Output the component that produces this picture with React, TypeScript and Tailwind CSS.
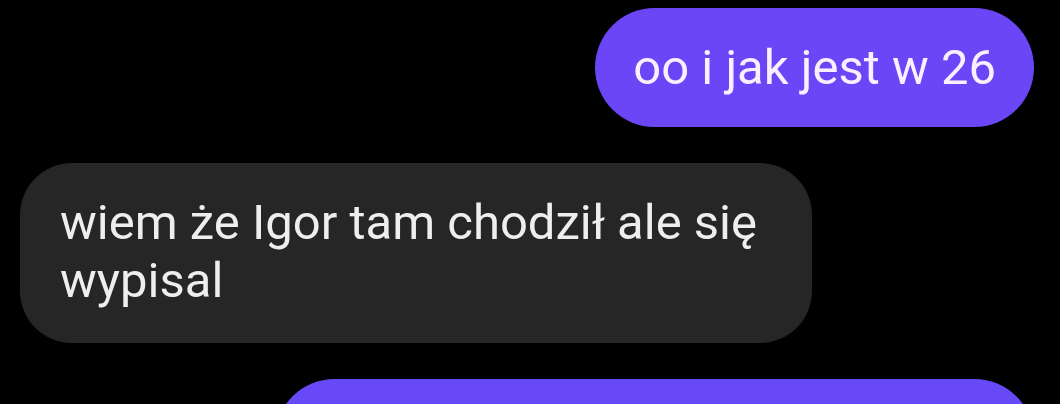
import React from "react";

const App = () => {
  return (
    <div
      className="w-[1060px] h-[404px] overflow-hidden bg-black flex flex-col gap-[36px] pt-[8px] pl-[20px] pr-[26px]"
      style={{ fontFamily: "Roboto, 'Noto Sans', sans-serif" }}
    >
      <div className="flex justify-end">
        <div className="h-[119px] px-[38px] flex items-center rounded-full bg-[#6a46f6] text-[#f7f0ff] text-[49px] leading-[58px]">
          oo i jak jest w 26
        </div>
      </div>
      <div className="flex justify-start">
        <div className="w-[792px] pl-[40px] pr-[40px] pt-[31px] pb-[33px] rounded-[52px] bg-[#262626] text-[#eeeeee] text-[49px] leading-[58px]">
          wiem że Igor tam chodził ale się wypisal
        </div>
      </div>
      <div className="flex justify-end shrink-0">
        <div className="w-[759px] h-[119px] rounded-full bg-[#6749f8]" />
      </div>
    </div>
  );
};

export default App;
